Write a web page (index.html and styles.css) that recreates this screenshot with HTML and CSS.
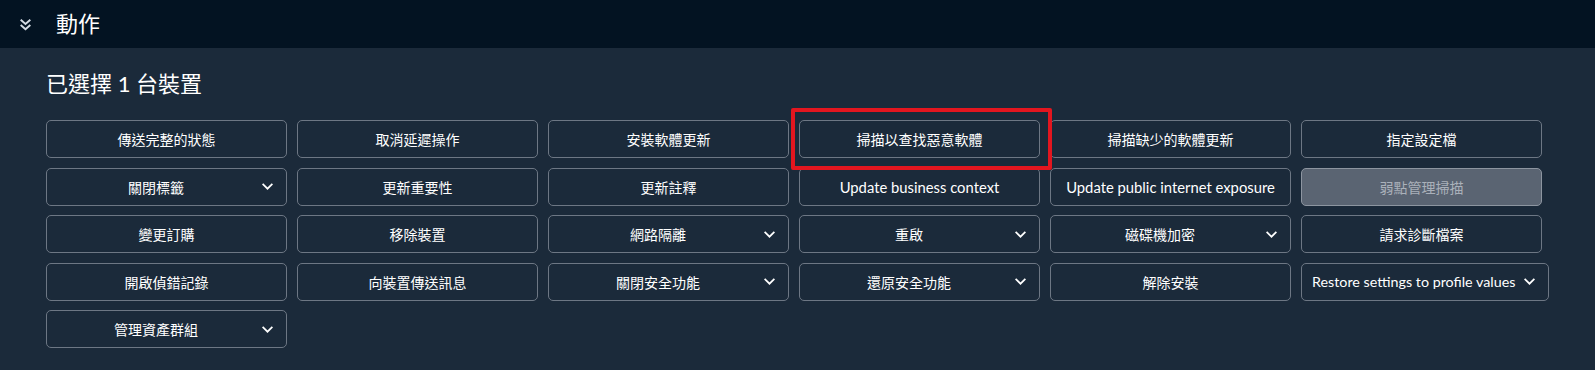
FILE: index.html
```html
<!DOCTYPE html>
<html lang="zh-Hant">
<head>
<meta charset="utf-8">
<title>動作</title>
<link rel="stylesheet" href="styles.css">
</head>
<body>
<header class="header">
  <svg class="header-icon" viewBox="0 0 14 14" aria-hidden="true">
    <polyline points="2.5,2.5 7,6.5 11.5,2.5"/>
    <polyline points="2.5,7.5 7,11.5 11.5,7.5"/>
  </svg>
  <span class="header-title">動作</span>
</header>
<main class="content">
  <h2 class="title">已選擇 1 台裝置</h2>
  <div class="actions">
    <button class="btn">傳送完整的狀態</button>
    <button class="btn">取消延遲操作</button>
    <button class="btn">安裝軟體更新</button>
    <button class="btn highlight">掃描以查找惡意軟體</button>
    <button class="btn">掃描缺少的軟體更新</button>
    <button class="btn">指定設定檔</button>

    <button class="btn dd"><span class="label">關閉標籤</span><svg class="chev" viewBox="0 0 12 12"><polyline points="1.5,3.5 6,8 10.5,3.5"/></svg></button>
    <button class="btn">更新重要性</button>
    <button class="btn">更新註釋</button>
    <button class="btn en">Update business context</button>
    <button class="btn en">Update public internet exposure</button>
    <button class="btn disabled">弱點管理掃描</button>

    <button class="btn">變更訂購</button>
    <button class="btn">移除裝置</button>
    <button class="btn dd"><span class="label">網路隔離</span><svg class="chev" viewBox="0 0 12 12"><polyline points="1.5,3.5 6,8 10.5,3.5"/></svg></button>
    <button class="btn dd"><span class="label">重啟</span><svg class="chev" viewBox="0 0 12 12"><polyline points="1.5,3.5 6,8 10.5,3.5"/></svg></button>
    <button class="btn dd"><span class="label">磁碟機加密</span><svg class="chev" viewBox="0 0 12 12"><polyline points="1.5,3.5 6,8 10.5,3.5"/></svg></button>
    <button class="btn">請求診斷檔案</button>

    <button class="btn">開啟偵錯記錄</button>
    <button class="btn">向裝置傳送訊息</button>
    <button class="btn dd"><span class="label">關閉安全功能</span><svg class="chev" viewBox="0 0 12 12"><polyline points="1.5,3.5 6,8 10.5,3.5"/></svg></button>
    <button class="btn dd"><span class="label">還原安全功能</span><svg class="chev" viewBox="0 0 12 12"><polyline points="1.5,3.5 6,8 10.5,3.5"/></svg></button>
    <button class="btn">解除安裝</button>
    <button class="btn dd wide"><span class="label">Restore settings to profile values</span><svg class="chev" viewBox="0 0 12 12"><polyline points="1.5,3.5 6,8 10.5,3.5"/></svg></button>

    <button class="btn dd"><span class="label">管理資產群組</span><svg class="chev" viewBox="0 0 12 12"><polyline points="1.5,3.5 6,8 10.5,3.5"/></svg></button>
  </div>
</main>
</body>
</html>
```
FILE: styles.css
```css
* { box-sizing: border-box; }

html, body {
  margin: 0;
  padding: 0;
}

body {
  background: #1b2a3a;
  color: #ffffff;
  font-family: "Lato", "Noto Sans CJK TC", "Noto Sans", sans-serif;
  width: 1595px;
  height: 370px;
  overflow: hidden;
}

.header {
  height: 48px;
  background: #031322;
  display: flex;
  align-items: center;
  padding-left: 18px;
}

.header-icon {
  width: 15px;
  height: 15px;
  fill: none;
  stroke: #d5dce4;
  stroke-width: 1.8;
  margin-top: 1px;
}

.header-title {
  margin-left: 23px;
  font-size: 22px;
  line-height: 30px;
  color: #ffffff;
}

.content {
  padding: 21px 0 0 46px;
}

.title {
  margin: 0 0 21px 0;
  font-size: 22px;
  line-height: 30px;
  font-weight: 400;
}

.actions {
  display: flex;
  flex-wrap: wrap;
  column-gap: 10px;
  row-gap: 9.5px;
}

.btn {
  width: 241px;
  height: 38px;
  flex: 0 0 auto;
  background: transparent;
  border: 1px solid #6d7784;
  border-radius: 5px;
  color: #ffffff;
  font-family: inherit;
  font-size: 14px;
  font-weight: 400;
  padding: 0 12px;
  display: flex;
  align-items: center;
  justify-content: center;
  white-space: nowrap;
}

.btn.en {
  font-size: 14.8px;
}

.btn.dd .label {
  flex: 1 1 auto;
  text-align: center;
}

.btn.dd .chev {
  width: 13px;
  height: 13px;
  margin-left: 8px;
  fill: none;
  stroke: #ffffff;
  stroke-width: 1.6;
  flex: 0 0 auto;
}

.btn.wide {
  width: auto;
  min-width: 241px;
  padding: 0 12px 0 10px;
  font-size: 14.3px;
}

.btn.disabled {
  background: #5a6472;
  border-color: #8d95a0;
  color: #aab1ba;
}

.btn.highlight {
  position: relative;
}

.btn.highlight::after {
  content: "";
  position: absolute;
  left: -9px;
  right: -13px;
  top: -13px;
  bottom: -13px;
  border: 4.5px solid #e3161f;
  border-radius: 2px;
  pointer-events: none;
}
```
